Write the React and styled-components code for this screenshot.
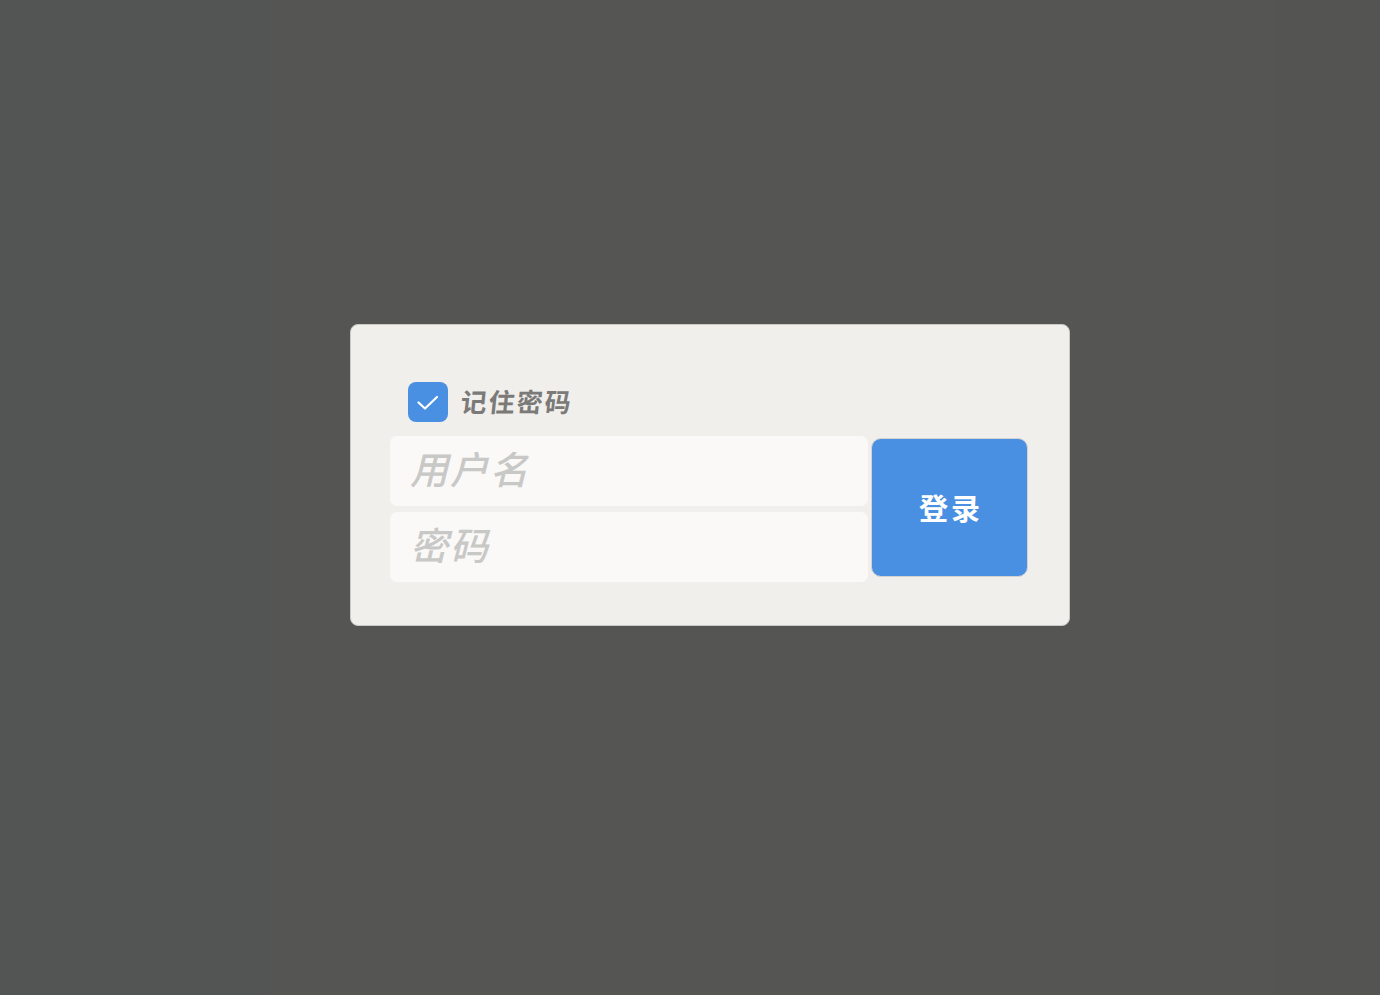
import React, { useState } from "react";
import styled, { createGlobalStyle } from "styled-components";

const Global = createGlobalStyle`
  html, body { margin: 0; padding: 0; }
  body {
    min-height: 995px;
    background: linear-gradient(90deg, #535554 0, #535554 270px, #555553 270px, #555553 1275px, #545453 1275px);
    font-family: "Noto Sans CJK SC", "Noto Sans", sans-serif;
  }
`;

const Page = styled.div`
  min-height: 995px;
  display: flex;
  align-items: flex-start;
  padding-top: 324px;
  padding-left: 350px;
  box-sizing: border-box;
`;

const Panel = styled.div`
  width: 720px;
  height: 302px;
  box-sizing: border-box;
  background: #f0efec;
  border: 1px solid #c9c9c6;
  border-radius: 8px;
  padding: 57px 41px 0 39px;
  display: flex;
  flex-direction: column;
`;

const CheckRow = styled.label`
  display: flex;
  align-items: center;
  gap: 13px;
  margin-left: 18px;
  height: 40px;
  cursor: pointer;
`;

const Box = styled.span`
  width: 40px;
  height: 40px;
  border-radius: 8px;
  background: ${(p) => (p.$on ? "#4a90e2" : "#fff")};
  display: flex;
  align-items: center;
  justify-content: center;
`;

const Label = styled.span`
  display: inline-block;
  transform: skewX(-6deg);
  font-size: 26px;
  font-weight: 700;
  color: #7b7a78;
  letter-spacing: 2px;
  line-height: 40px;
  margin-top: -3px;
`;

const FormRow = styled.div`
  display: flex;
  align-items: center;
  gap: 3px;
  margin-top: 14px;
`;

const Fields = styled.div`
  display: flex;
  flex-direction: column;
  gap: 6px;
  width: 479px;
`;

const Input = styled.input`
  height: 70px;
  box-sizing: border-box;
  border: none;
  outline: none;
  border-radius: 7px;
  background: #faf9f7;
  padding: 0 20px 7px;
  font-family: "Noto Sans CJK SC", "Noto Sans", sans-serif;
  font-size: 38px;
  font-weight: 500;
  color: #555;
  &::placeholder {
    color: #c8c8c7;
    font-style: italic;
    letter-spacing: 2px;
  }
`;

const Button = styled.button`
  width: 157px;
  height: 139px;
  margin-top: -4px;
  box-sizing: border-box;
  background: #4a90e2;
  border: 1.5px solid #d3d3d1;
  border-radius: 10px;
  color: #fff;
  font-family: "Noto Sans CJK SC", "Noto Sans", sans-serif;
  font-size: 29px;
  font-weight: 700;
  letter-spacing: 3px;
  padding: 0 0 0 3px;
  cursor: pointer;
`;

export default function App() {
  const [on, setOn] = useState(true);
  return (
    <>
      <Global />
      <Page>
        <Panel>
          <CheckRow onClick={() => setOn(!on)}>
            <Box $on={on}>
              {on && (
                <svg width="24" height="24" viewBox="0 0 24 24" fill="none">
                  <path d="M2.5 12.5 L9 18.5 L21 7" stroke="#fff" strokeWidth="2.2" strokeLinecap="round" strokeLinejoin="round" />
                </svg>
              )}
            </Box>
            <Label>记住密码</Label>
          </CheckRow>
          <FormRow>
            <Fields>
              <Input placeholder="用户名" />
              <Input type="password" placeholder="密码" />
            </Fields>
            <Button>登录</Button>
          </FormRow>
        </Panel>
      </Page>
    </>
  );
}
